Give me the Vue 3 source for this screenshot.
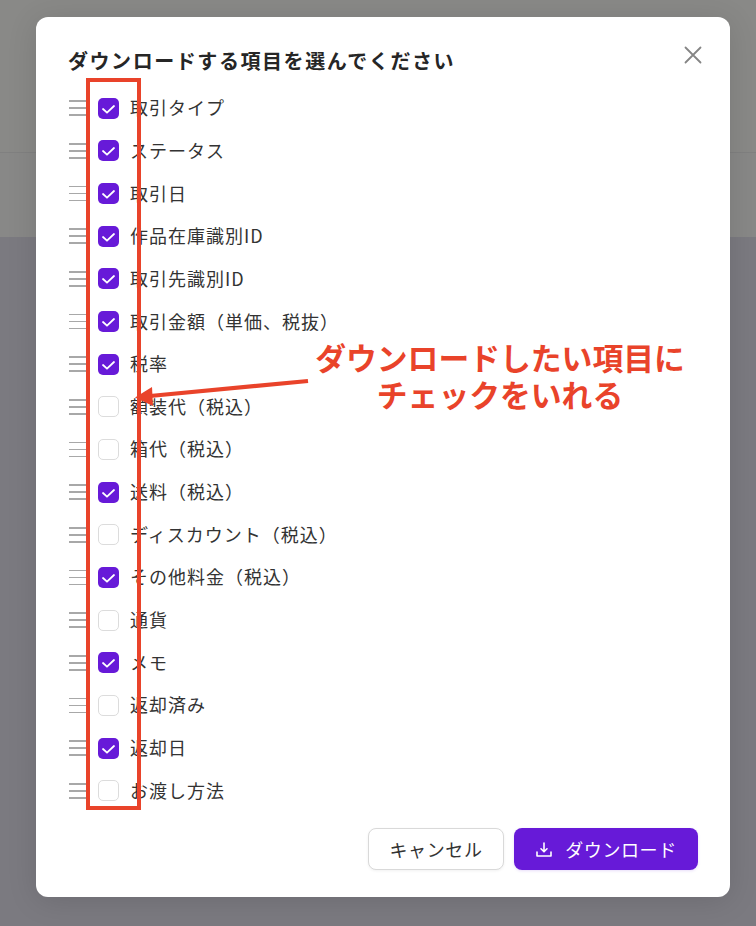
<script setup>
const rows = [
  ['取引タイプ', true], ['ステータス', true], ['取引日', true], ['作品在庫識別ID', true],
  ['取引先識別ID', true], ['取引金額（単価、税抜）', true], ['税率', true], ['額装代（税込）', false],
  ['箱代（税込）', false], ['送料（税込）', true], ['ディスカウント（税込）', false], ['その他料金（税込）', true],
  ['通貨', false], ['メモ', true], ['返却済み', false], ['返却日', true], ['お渡し方法', false],
]
</script>

<template>
  <div class="page">
    <div class="bg-top"></div>
    <div class="bg-mid"></div>
    <div class="bg-rest"></div>

    <section class="modal">
      <svg class="close" width="20" height="20" viewBox="0 0 20 20" fill="none">
        <path d="M2.5 2.5 17.5 17.5M17.5 2.5 2.5 17.5" stroke="#858585" stroke-width="1.8" stroke-linecap="round" />
      </svg>
      <h2 class="title">ダウンロードする項目を選んでください</h2>
      <ul class="list">
        <li v-for="r in rows" :key="r[0]" class="row">
          <span class="handle"><i></i><i></i><i></i></span>
          <span class="box" :class="{ on: r[1] }">
            <svg v-if="r[1]" width="21" height="21" viewBox="0 0 21 21" fill="none">
              <path d="M5 11 9 14.7 16 8" stroke="#fff" stroke-width="1.8" stroke-linecap="round" stroke-linejoin="round" />
            </svg>
          </span>
          <span class="label">{{ r[0] }}</span>
        </li>
      </ul>
      <footer class="actions">
        <button class="btn cancel">キャンセル</button>
        <button class="btn primary">
          <svg width="18" height="18" viewBox="0 0 18 18" fill="none">
            <path d="M9 3V11.5M6 8.8 9 11.8 12 8.8M2 12V16H16V12" stroke="#fff" stroke-width="1.6" stroke-linecap="round" stroke-linejoin="round" />
          </svg>
          <span>ダウンロード</span>
        </button>
      </footer>
    </section>

    <div class="redbox"></div>
    <svg class="arrow" width="756" height="926" viewBox="0 0 756 926" fill="none">
      <path d="M308 381 150 396" stroke="#e9432a" stroke-width="4.2" />
      <path d="M135 397.5 152 387 153 406Z" fill="#e9432a" />
    </svg>
    <p class="note"><span class="line">ダウンロードしたい項目に</span><span class="line">チェックをいれる</span></p>
  </div>
</template>

<style>
html, body { margin: 0; padding: 0; }
</style>

<style scoped>
.page {
  position: relative;
  width: 756px;
  height: 926px;
  overflow: hidden;
  display: flex;
  flex-direction: column;
  font-family: "Noto Sans CJK JP", "Noto Sans", sans-serif;
  color: #2b2b2b;
}
.bg-top { height: 153px; background: #898987; border-bottom: 1px solid #808080; box-sizing: border-box; }
.bg-mid { height: 84px; background: #888887; }
.bg-rest { flex: 1; background: #7b7a80; }
.modal {
  position: absolute;
  left: 36px;
  top: 17px;
  width: 694px;
  height: 880px;
  box-sizing: border-box;
  padding: 29px 32px 27px 32px;
  background: #fff;
  border-radius: 12px;
  box-shadow: 0 4px 30px rgba(0, 0, 0, 0.12);
  display: flex;
  flex-direction: column;
}
.close { position: absolute; left: 646.5px; top: 27.5px; }
.title {
  margin: 0 0 10.9px;
  font-size: 20px;
  line-height: 30px;
  font-weight: 700;
  letter-spacing: 1.56px;
  color: #262626;
  white-space: nowrap;
}
.list {
  list-style: none;
  margin: 0;
  padding: 0;
  display: flex;
  flex-direction: column;
}
.row {
  height: 42.67px;
  display: flex;
  align-items: center;
}
.handle {
  width: 18px;
  margin-left: 1px;
  display: flex;
  flex-direction: column;
  gap: 5.3px;
}
.handle i { display: block; height: 1.7px; background: #a8a8a8; }
.box {
  width: 21px;
  height: 21px;
  margin-left: 11px;
  box-sizing: border-box;
  border-radius: 5px;
  border: 1px solid #dcdcdc;
  background: #fff;
}
.box.on { border: none; background: #671ad8; }
.box svg { display: block; }
.label {
  margin: 0 0 2px 11px;
  font-size: 18px;
  letter-spacing: 1px;
  line-height: 24px;
  color: #333;
  white-space: nowrap;
}
.actions {
  margin-top: auto;
  display: flex;
  justify-content: flex-end;
  gap: 10px;
}
.btn {
  height: 42px;
  box-sizing: border-box;
  border-radius: 8px;
  font-family: inherit;
  font-size: 18px;
  letter-spacing: 0.6px;
  display: flex;
  align-items: center;
  justify-content: center;
  padding: 0;
}
.cancel {
  width: 136px;
  background: #fff;
  border: 1px solid #d9d9d9;
  color: #333;
  box-shadow: 0 1px 3px rgba(0, 0, 0, 0.06);
}
.primary {
  width: 184px;
  background: #671ad8;
  border: none;
  color: #fff;
  gap: 12px;
  box-shadow: 0 1px 3px rgba(103, 26, 216, 0.15);
}
.redbox {
  position: absolute;
  left: 86px;
  top: 78px;
  width: 55px;
  height: 732px;
  box-sizing: border-box;
  border: 4px solid #e9432a;
}
.arrow { position: absolute; left: 0; top: 0; pointer-events: none; }
.note {
  position: absolute;
  left: 300px;
  top: 339px;
  width: 400px;
  margin: 0;
  display: flex;
  flex-direction: column;
  gap: 1px;
  text-align: center;
  font-size: 30.8px;
  font-weight: 700;
  color: #e9432a;
  white-space: nowrap;
}
.line { display: block; line-height: 36px; height: 35.5px; }
</style>
